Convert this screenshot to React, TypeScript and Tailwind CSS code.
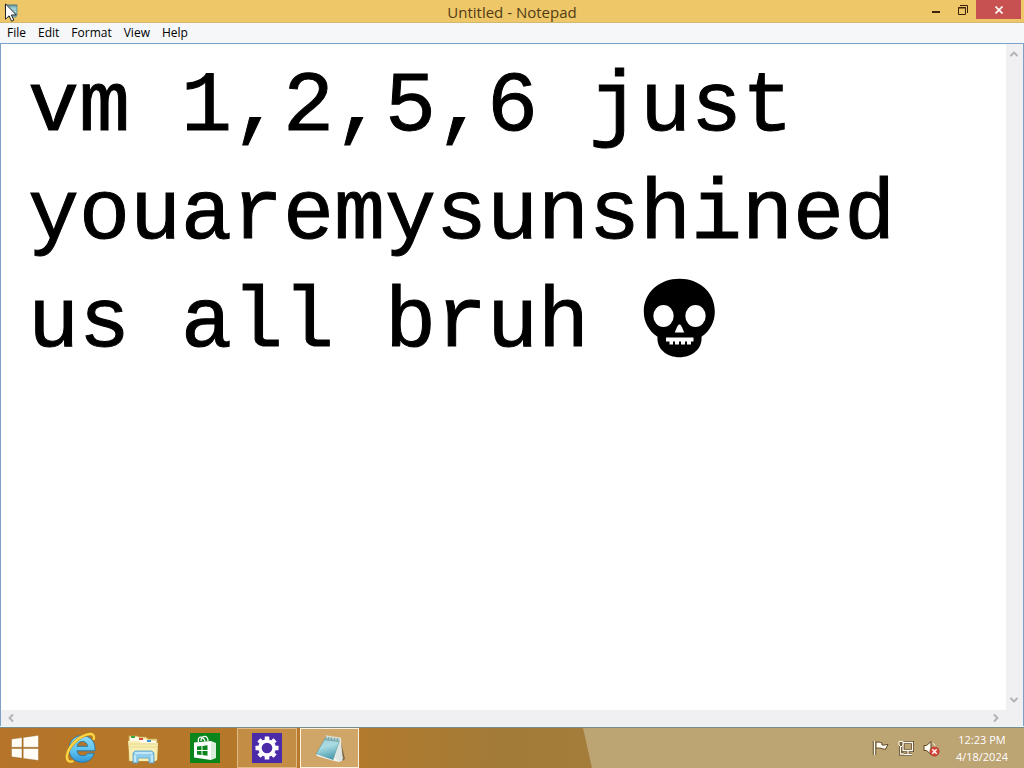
import { useState } from "react";
import type { ReactNode } from "react";
import { ChevronDown, ChevronLeft, ChevronRight, ChevronUp } from "lucide-react";

const NOTE = "vm 1,2,5,6 just\nyouaremysunshined\nus all bruh ";
const MENUS = ["File", "Edit", "Format", "View", "Help"];

function NotepadGlyph({ className }: { className: string }) {
  return (
    <svg viewBox="0 0 32 32" className={className} aria-hidden="true">
      <defs>
        <linearGradient id="pad" x1="0" y1="0" x2="0.3" y2="1">
          <stop offset="0" stopColor="#9fcdd2" />
          <stop offset="0.5" stopColor="#a9dbe3" />
          <stop offset="1" stopColor="#4f9eb0" />
        </linearGradient>
      </defs>
      <path d="M26 6 31 27 26 30 22 26Z" fill="#7d6a45" />
      <path d="M13 4 27 6 28 29 25 30 3 23Z" fill="#f4f5ef" />
      <path d="M26 7 29 27 25 30 21 26Z" fill="#dfe5e2" />
      <path d="M12 5 26 7 19 28 2 22Z" fill="url(#pad)" stroke="#5c949c" strokeWidth="0.6" />
      <path d="M12 5 26 7 25 10 10 8Z" fill="#78a5a8" />
      <path d="m13 3 0 4m3-3.500 0 4m3-3.500 0 4m3-3.500 0 4m3-3.500 0 4" stroke="#dce9e5" strokeWidth="1" />
      <path d="M2 22 19 28l6 2-5-1L3 24Z" fill="#eef3f0" />
    </svg>
  );
}

function TitleIcon() {
  return (
    <svg viewBox="0 0 16 16" className="absolute top-[3px] left-[3px] size-4" aria-hidden="true">
      <path d="M2 2h12v10l-1 2H3Z" fill="#8fc3cc" stroke="#5d8b90" strokeWidth="0.800" />
      <path d="M3 1.500v2m2-2v2m2-2v2m2-2v2m2-2v2m2-2v2" stroke="#3f6469" strokeWidth="0.900" />
      <path d="M4 6h9M4 8.500h9M4 11h8" stroke="#b9e0e6" strokeWidth="0.800" />
    </svg>
  );
}

function Pointer() {
  return (
    <svg viewBox="0 0 12 19" className="absolute top-[3px] left-[5px] h-[19px] w-3" aria-hidden="true">
      <path d="M.5.8v15.400l3.600-3.400 2.400 5.400 2.300-1-2.400-5.200h4.900Z" fill="#fff" stroke="#111" strokeWidth="0.900" />
    </svg>
  );
}

function Skull() {
  return (
    <svg viewBox="0 0 74 80" className="pointer-events-none absolute top-[234px] left-[641px] h-20 w-[74px]" role="img" aria-label="Skull">
      <path d="M37.500.8C57 .8 72.800 14 72.800 33.500c0 11-5 19.500-13.300 25.200C60.500 71 50 79.200 37.500 79.200S14.500 71 15.500 58.700C7 53 1.800 44.500 1.800 33.500 1.800 14 18 .8 37.500.8Z" fill="#000" />
      <ellipse cx="21.500" cy="38" rx="10.200" ry="11" fill="#fff" />
      <ellipse cx="53.500" cy="38" rx="10.200" ry="11" fill="#fff" />
      <path d="M37.500 46.500c1.500 0 2.500 2.500 4.700 8H32.800c2.200-5.500 3.200-8 4.700-8Z" fill="#fff" />
      <path d="M24 59.500h27.500v4H49v3h-4v-3h-2v3h-4v-3h-2v3h-4v-3h-2v3h-3.500v-3H24Z" fill="#fff" />
    </svg>
  );
}

function WindowsLogo() {
  return (
    <svg viewBox="0 0 28 26" className="h-[26px] w-7" aria-hidden="true" fill="#fffdf5" stroke="#8a5a1c" strokeWidth="0.400">
      <path d="M.5 4 11 2.600V12.300H.5ZM12.200 2.400 27.500.3v12H12.200ZM.5 13.500H11v9.700L.5 21.800ZM12.200 13.500H27.500v12L12.200 23.400Z" />
    </svg>
  );
}

function ExplorerBrowser() {
  return (
    <svg viewBox="0 0 32 32" className="size-8" aria-hidden="true">
      <defs>
        <linearGradient id="ie" x1="0" y1="0" x2="0" y2="1">
          <stop offset="0" stopColor="#8ddcf7" />
          <stop offset="0.600" stopColor="#5cc1ee" />
          <stop offset="1" stopColor="#2f95d6" />
        </linearGradient>
      </defs>
      <path d="M17 3.500C24.500 3.500 30 9 30 16.500v2.300H12c.3 3.200 2.500 5 5.600 5 2.300 0 4-.8 5.100-2.500h6.500C27.300 27 23 30.300 17.200 30.300 9.500 30.300 4 24.500 4 17S9.500 3.500 17 3.500Zm-5 10.800h10.700c-.3-3-2.400-4.900-5.300-4.900-3 0-5 1.900-5.400 4.900Z" fill="url(#ie)" stroke="#2478a8" strokeWidth="0.900" />
      <path d="M28.500 8C30 3.500 28 1 22.500 2.400 14 4.500 3.500 14 2 23.200 1.300 28 3.500 31 8.500 29" fill="none" stroke="#b98715" strokeWidth="3.200" />
      <path d="M28.500 8C30 3.500 28 1 22.500 2.400 14 4.500 3.500 14 2 23.200 1.300 28 3.500 31 8.500 29" fill="none" stroke="#fbd447" strokeWidth="2.300" />
    </svg>
  );
}

function Folder() {
  return (
    <svg viewBox="0 0 32 32" className="size-8" aria-hidden="true">
      <path d="M2 4h8l2 1h7l2 2h9v21l-2 1H2Z" fill="#efe19a" stroke="#c3a954" strokeWidth="0.700" />
      <path d="M4 5h7l2 2h6l1 2h9v2H3V5Z" fill="#fffbed" />
      <path d="M4 4h4v2H4Z" fill="#39a83e" /><path d="M12 6h4v2h-4Z" fill="#d84a31" /><path d="M20 8h4v2h-4Z" fill="#3f96d0" />
      <path d="M1 9h11l2 2h17l-1 17-2 1H3Z" fill="#f7eeb1" />
      <path d="M2 12h28M2 15h28" stroke="#e3ce79" strokeWidth="0.700" />
      <path d="M6 31V21l2-2h17l2 2v10h-5v-5H11v5Z" fill="#8fcdec" stroke="#5a9fca" strokeWidth="0.800" />
      <path d="M8 21h17M8 23v7m17-7v7" stroke="#d2effc" strokeWidth="1.500" />
    </svg>
  );
}

function Store() {
  return (
    <svg viewBox="0 0 30 30" className="size-[30px]" aria-hidden="true">
      <path d="M0 0h30v30H0Z" fill="#09851b" />
      <path d="M8.500 9C7 3 13 2 15 8.500M11 8c0-6 7-6.500 7 0" fill="none" stroke="#fff" strokeWidth="1.300" />
      <path d="M4 9.500 21 8v19L4 24.500Z" fill="#fff" />
      <path d="M21 8 26 10v15l-5 2Z" fill="#d9eedb" />
      <path d="M7 13.500 11.500 13v4H7Zm5.500-.6 5-.6V17h-5ZM7 18h4.500v4L7 21.500Zm5.500 0h5v4.700l-5-.6Z" fill="#09851b" />
    </svg>
  );
}

function Settings() {
  return (
    <svg viewBox="0 0 30 30" className="size-[30px]" aria-hidden="true">
      <path d="M0 0h30v30H0Z" fill="#4b2ba8" />
      <g fill="#fff">
        {[0, 45, 90, 135].map((a) => (
          <rect key={a} x="12.700" y="3.500" width="4.600" height="23" rx="0.500" transform={`rotate(${a} 15 15)`} />
        ))}
        <circle cx="15" cy="15" r="8.800" />
      </g>
      <circle cx="15" cy="15" r="5.300" fill="#4b2ba8" />
    </svg>
  );
}

function TrayFlag() {
  return (
    <svg viewBox="0 0 18 18" className="size-[18px]" aria-hidden="true">
      <path d="M2.500 2v14" stroke="#5b4526" strokeWidth="3.400" />
      <path d="M4 3.500c3-1.500 4 .5 6 .3V6c2 .5 3-.5 6-.5-1 2-2 3.500-2 4.500-2 0-4 .3-5-.8-2 0-3-.7-5 .3Z" fill="#fffbee" stroke="#5b4526" strokeWidth="1" />
      <path d="M2.500 2v14" stroke="#fffbee" strokeWidth="1.500" />
    </svg>
  );
}

function TrayNetwork() {
  return (
    <svg viewBox="0 0 18 18" className="size-[18px]" aria-hidden="true" fill="none">
      <path d="M6 3.500h9.500v8H6zM11 11.500V15M7 15.500h8M3.500 7v8H7" stroke="#5b4526" strokeWidth="3" />
      <path d="M6 3.500h9.500v8H6zM11 11.500V15M7 15.500h8M3.500 7v8H7" stroke="#fffbee" strokeWidth="1.300" />
      <path d="M2 2.500h4V6L4 8 2 6Z" fill="#7b6238" stroke="#fffbee" strokeWidth="1" />
    </svg>
  );
}

function TrayVolume() {
  return (
    <svg viewBox="0 0 18 18" className="size-[18px]" aria-hidden="true">
      <path d="M2 6.500h2.500L9 2.500v13l-4.500-4H2Z" fill="#fffbee" stroke="#5b4526" strokeWidth="1" />
      <path d="M10.500 4c2 1 2.500 2.500 2.500 4" fill="none" stroke="#fffbee" />
      <circle cx="12.500" cy="12.500" r="4.600" fill="#d94338" stroke="#a83228" strokeWidth="0.700" />
      <path d="m10.300 10.300 4.400 4.400m0-4.400-4.400 4.400" stroke="#fff" strokeWidth="1.400" />
    </svg>
  );
}

function TaskButton({ label, className, children }: { label: string; className: string; children: ReactNode }) {
  return (
    <button type="button" aria-label={label} className={`flex h-10 shrink-0 items-center justify-center ${className}`}>
      {children}
    </button>
  );
}

export default function App() {
  const [text, setText] = useState(NOTE);
  return (
    <div className="flex h-screen flex-col overflow-hidden bg-white font-['Open_Sans','Noto_Sans',sans-serif]">
      <header className="relative grid h-[23px] shrink-0 grid-cols-[1fr_auto_1fr] border-b border-[#d5b872] bg-[#eec768]">
        <div className="relative">
          <TitleIcon />
          <Pointer />
        </div>
        <h1 className="text-[15px] leading-6 text-[#513c14]">Untitled - Notepad</h1>
        <div className="flex justify-end pr-[3px] text-[#3c2108]">
          <button type="button" aria-label="Minimize" className="flex h-[19px] w-[27px] items-center justify-center">
            <svg viewBox="0 0 10 10" className="size-2.5"><path d="M1 6h8v2H1Z" fill="currentColor" /></svg>
          </button>
          <button type="button" aria-label="Restore" className="flex h-[19px] w-[27px] items-center justify-center">
            <svg viewBox="0 0 10 10" className="size-2.5" fill="none" stroke="currentColor"><path d="M.5 2.500h7v7h-7ZM0 3h8M2 .5h7.500V8" /></svg>
          </button>
          <button type="button" aria-label="Close" className="flex h-[19px] w-[45px] items-center justify-center bg-[#c75050] text-white">
            <svg viewBox="0 0 8 8" className="size-2"><path d="m.5.5 7 7m0-7-7 7" stroke="currentColor" strokeWidth="1.600" /></svg>
          </button>
        </div>
      </header>

      <nav aria-label="Menu" className="flex h-5 shrink-0 items-center gap-3 bg-[#f5f7f8] px-[7px] text-xs leading-5 text-black">
        {MENUS.map((m) => (
          <button key={m} type="button">{m}</button>
        ))}
      </nav>

      <main className="grid min-h-0 flex-1 grid-cols-[minmax(0,1fr)_15px] grid-rows-[minmax(0,1fr)_16px] border-x border-t border-[#7ba2c6] bg-[#f0f0f2] pr-0.5">
        <div className="relative min-w-0 bg-white">
          <textarea
            aria-label="Document text"
            wrap="off"
            spellCheck={false}
            value={text}
            onChange={(e) => setText(e.target.value)}
            className="block h-full w-full resize-none overflow-hidden bg-white pt-2.5 pl-[27px] font-['Liberation_Mono',monospace] text-[85px] leading-[108px] text-black outline-none [-webkit-text-stroke:1px_black]"
          />
          <Skull />
        </div>
        <div className="flex flex-col items-center justify-between py-1 text-[#b4b4b8]">
          <button type="button" aria-label="Scroll up"><ChevronUp className="size-3" strokeWidth={4} /></button>
          <button type="button" aria-label="Scroll down"><ChevronDown className="size-3" strokeWidth={4} /></button>
        </div>
        <div className="flex items-center justify-between px-1 text-[#b4b4b8]">
          <button type="button" aria-label="Scroll left"><ChevronLeft className="size-3" strokeWidth={4} /></button>
          <button type="button" aria-label="Scroll right"><ChevronRight className="size-3" strokeWidth={4} /></button>
        </div>
      </main>
      <div className="h-px shrink-0 bg-[#e3f6fa]" />

      <footer className="relative flex h-[41px] shrink-0 border-t border-[#7d8c88] bg-[#b67a2a]">
        <svg className="absolute inset-0 h-full w-full" viewBox="0 0 1024 40" preserveAspectRatio="none" aria-hidden="true">
          <defs>
            <linearGradient id="wood" x1="0" x2="1" y1="0" y2="0">
              <stop offset="0" stopColor="#b57429" />
              <stop offset="0.550" stopColor="#b57a2a" />
              <stop offset="0.850" stopColor="#a27b38" />
              <stop offset="1" stopColor="#a47d3a" />
            </linearGradient>
          </defs>
          <path d="M0 0H592V40H0Z" fill="url(#wood)" />
          <path d="M583 0H1024V40H592Z" fill="#bca473" />
        </svg>
        <nav aria-label="Taskbar" className="relative flex flex-1">
          <TaskButton label="Start" className="w-[50px]"><WindowsLogo /></TaskButton>
          <TaskButton label="Internet Explorer" className="w-[62px]"><ExplorerBrowser /></TaskButton>
          <TaskButton label="File Explorer" className="w-[62px]"><Folder /></TaskButton>
          <TaskButton label="Store" className="w-[62px]"><Store /></TaskButton>
          <TaskButton label="PC settings" className="ml-px w-[60px] border border-[#e0b987] bg-[#c48d46]"><Settings /></TaskButton>
          <TaskButton label="Notepad" className="ml-[3px] w-[59px] border border-[#fff2dc] bg-[#cfa667]"><NotepadGlyph className="size-8" /></TaskButton>
        </nav>
        <div className="relative flex items-center pr-4 text-white">
          <div className="mr-4 flex gap-[7px]">
            <button type="button" aria-label="Action Center"><TrayFlag /></button>
            <button type="button" aria-label="Network"><TrayNetwork /></button>
            <button type="button" aria-label="Volume muted"><TrayVolume /></button>
          </div>
          <time dateTime="2024-04-18T12:23" className="flex flex-col items-center text-[11px] leading-[17px]">
            <span>12:23 PM</span>
            <span>4/18/2024</span>
          </time>
        </div>
      </footer>
    </div>
  );
}
